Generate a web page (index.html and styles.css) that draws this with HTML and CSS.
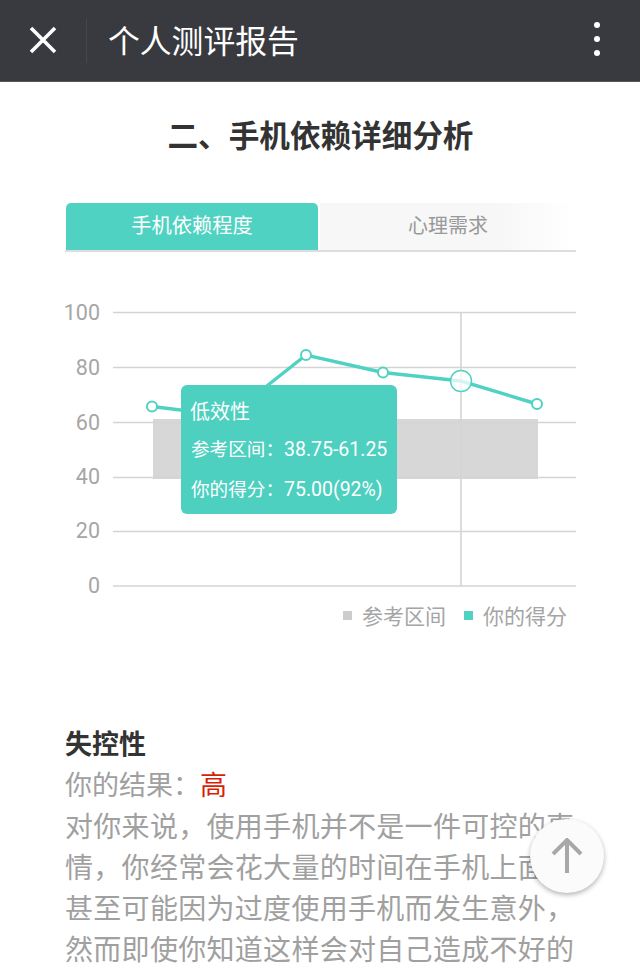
FILE: index.html
```html
<!DOCTYPE html>
<html lang="zh">
<head>
<meta charset="utf-8">
<title>个人测评报告</title>
<link rel="stylesheet" href="styles.css">
</head>
<body>
<header class="topbar">
  <svg class="close-icon" viewBox="0 0 28 28" width="28" height="28"><path d="M2 2 L26 26 M26 2 L2 26"/></svg>
  <span class="divider"></span>
  <span class="topbar-title">个人测评报告</span>
  <span class="more"><i></i><i></i><i></i></span>
</header>
<main class="content">
  <h1 class="page-title">二、手机依赖详细分析</h1>
  <div class="tabs">
    <div class="tab tab-active">手机依赖程度</div>
    <div class="tab tab-idle">心理需求</div>
  </div>
  <div class="chart">
    <svg class="plot" viewBox="60 300 530 300" width="530" height="300">
      <rect class="band" x="153" y="419" width="385" height="60"/>
      <g class="grid">
        <path d="M113 312.5H576M113 367.5H576M113 422.5H576M113 477.5H576M113 531.5H576M113 586H576"/>
        <path d="M461 313V586"/>
      </g>
      <g class="ticks">
        <text x="100" y="320">100</text>
        <text x="100" y="375">80</text>
        <text x="100" y="430">60</text>
        <text x="100" y="484">40</text>
        <text x="100" y="538">20</text>
        <text x="100" y="593">0</text>
      </g>
      <polyline class="line" points="152,406.5 229,416 306,355 383,372.5 461,381 537,404"/>
      <g class="dots">
        <circle cx="152" cy="406.5" r="5"/>
        <circle cx="306" cy="355" r="5"/>
        <circle cx="383" cy="372.5" r="5"/>
        <circle cx="537" cy="404" r="5"/>
      </g>
      <circle class="dot-active" cx="461" cy="381" r="10.5"/>
    </svg>
    <div class="tooltip">
      <div class="tip-title">低效性</div>
      <div class="tip-row">参考区间：<span class="tip-num">38.75-61.25</span></div>
      <div class="tip-row">你的得分：<span class="tip-num">75.00(92%)</span></div>
    </div>
    <div class="legend">
      <span class="legend-item"><i class="swatch swatch-gray"></i>参考区间</span>
      <span class="legend-item"><i class="swatch swatch-teal"></i>你的得分</span>
    </div>
  </div>
  <section class="result">
    <h2 class="result-title">失控性</h2>
    <p class="result-line">你的结果：<span class="level">高</span></p>
    <p class="result-text">对你来说，使用手机并不是一件可控的事情，你经常会花大量的时间在手机上面，甚至可能因为过度使用手机而发生意外，然而即使你知道这样会对自己造成不好的</p>
  </section>
</main>
<button class="to-top" type="button" aria-label="返回顶部">
  <svg viewBox="0 0 32 36" width="32" height="36"><path d="M16 35V3M2 16 L16 2 L30 16"/></svg>
</button>
</body>
</html>
```
FILE: styles.css
```css
* { box-sizing: border-box; }
html, body { margin: 0; padding: 0; height: 974px; overflow: hidden; background: #fff; }
body { position: relative; font-family: "Noto Sans CJK SC", "Noto Sans", sans-serif; color: #999; }

.topbar { height: 82px; background: #393a3f; border-bottom: 1px solid #55565a; display: flex; align-items: center; padding: 0 40px 0 29px; color: #fff; }
.close-icon { flex: none; margin-top: -2px; }
.close-icon path { stroke: #fff; stroke-width: 3.6; fill: none; }
.divider { width: 1px; height: 44px; background: #46474c; margin-left: 29px; }
.topbar-title { font-size: 31.8px; line-height: 40px; margin-left: 21px; flex: 1; margin-top: -4px; }
.more { display: flex; flex-direction: column; gap: 8px; margin-top: -4px; }
.more i { display: block; width: 6px; height: 6px; border-radius: 50%; background: #fff; }

.content { padding: 0 64px 0 65px; }
.page-title { margin: 30px 0 0; height: 44px; font-size: 30.6px; line-height: 44px; font-weight: 700; color: #333; text-align: center; white-space: nowrap; }

.tabs { display: flex; margin-top: 47px; height: 49px; border-bottom: 2px solid #ddd; gap: 2px; }
.tab { height: 47px; line-height: 43px; text-align: center; }
.tab-active { width: 252px; margin-left: 1px; font-size: 20.3px; background: #50d2c2; color: #fff; border-radius: 5px 5px 0 0; }
.tab-idle { flex: 1; font-size: 20px; color: #999; background: linear-gradient(to right, #f7f7f7 70%, #fff 100%); }

.chart { position: relative; margin-top: 48px; height: 383px; }
.plot { display: block; margin-left: -5px; overflow: visible; }
.band { fill: #d7d7d7; }
.grid path { stroke: #d4d4d4; stroke-width: 1.6; fill: none; }
.ticks text { font-family: Roboto, "Liberation Sans", sans-serif; font-size: 21.5px; fill: #a6a6a6; text-anchor: end; }
.line { fill: none; stroke: #50d2c2; stroke-width: 3.4; }
.dots circle { fill: #fff; stroke: #50d2c2; stroke-width: 2; }
.dot-active { fill: rgba(255,255,255,.75); stroke: #50d2c2; stroke-width: 1.5; }

.tooltip { position: absolute; left: 116px; top: 85px; width: 216px; height: 129px; padding: 12px 8px 0 10px; background: #4dd0bf; border-radius: 6px; color: #fff; white-space: nowrap; }
.tip-title { font-size: 20px; line-height: 28px; margin-left: -1px; }
.tip-row { font-size: 18.6px; line-height: 38px; font-family: "Noto Sans CJK SC", sans-serif; }
.tip-num { font-family: Roboto, "Liberation Sans", sans-serif; font-size: 19.5px; }
.tip-title + .tip-row { margin-top: 4px; }

.legend { display: flex; justify-content: flex-end; gap: 18px; padding-right: 9px; margin-top: -1px; font-size: 21px; line-height: 32px; color: #a5a5a5; }
.legend-item { display: flex; align-items: center; }
.swatch { display: block; width: 9px; height: 9px; margin-right: 10px; }
.swatch-gray { background: #ccc; }
.swatch-teal { background: #50d2c2; }

.result { margin-top: 39px; }
.result-title { margin: 0; font-size: 27px; line-height: 41px; font-weight: 700; color: #333; }
.result-line { margin: 0; font-size: 27px; line-height: 41px; color: #a0a0a0; }
.result-text { margin: 1px 0 0; font-size: 28px; line-height: 41px; letter-spacing: .3px; color: #a0a0a0; }
.level { color: #d81e06; }

.to-top { position: absolute; left: 530px; top: 819px; width: 74px; height: 74px; padding: 0; border: 0; border-radius: 50%; background: #fbfbfb; box-shadow: 0 2px 5px rgba(0,0,0,.3); display: flex; align-items: center; justify-content: center; }
.to-top path { stroke: #a8a8a8; stroke-width: 4; fill: none; }
```
